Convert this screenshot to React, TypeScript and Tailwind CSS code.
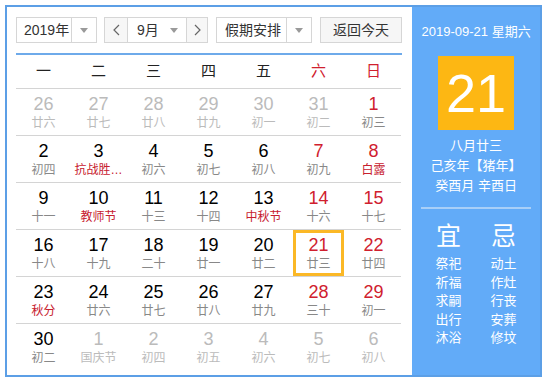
import React from 'react'

type Day = {
	num: number
	lunar: string
	dim?: boolean
	redNum?: boolean
	redLunar?: boolean
	today?: boolean
}

const rows: Day[][] = [
	[
		{ num: 26, lunar: '廿六', dim: true },
		{ num: 27, lunar: '廿七', dim: true },
		{ num: 28, lunar: '廿八', dim: true },
		{ num: 29, lunar: '廿九', dim: true },
		{ num: 30, lunar: '初一', dim: true },
		{ num: 31, lunar: '初二', dim: true },
		{ num: 1, lunar: '初三', redNum: true },
	],
	[
		{ num: 2, lunar: '初四' },
		{ num: 3, lunar: '抗战胜…', redLunar: true },
		{ num: 4, lunar: '初六' },
		{ num: 5, lunar: '初七' },
		{ num: 6, lunar: '初八' },
		{ num: 7, lunar: '初九', redNum: true },
		{ num: 8, lunar: '白露', redNum: true, redLunar: true },
	],
	[
		{ num: 9, lunar: '十一' },
		{ num: 10, lunar: '教师节', redLunar: true },
		{ num: 11, lunar: '十三' },
		{ num: 12, lunar: '十四' },
		{ num: 13, lunar: '中秋节', redLunar: true },
		{ num: 14, lunar: '十六', redNum: true },
		{ num: 15, lunar: '十七', redNum: true },
	],
	[
		{ num: 16, lunar: '十八' },
		{ num: 17, lunar: '十九' },
		{ num: 18, lunar: '二十' },
		{ num: 19, lunar: '廿一' },
		{ num: 20, lunar: '廿二' },
		{ num: 21, lunar: '廿三', redNum: true, today: true },
		{ num: 22, lunar: '廿四', redNum: true },
	],
	[
		{ num: 23, lunar: '秋分', redLunar: true },
		{ num: 24, lunar: '廿六' },
		{ num: 25, lunar: '廿七' },
		{ num: 26, lunar: '廿八' },
		{ num: 27, lunar: '廿九' },
		{ num: 28, lunar: '三十', redNum: true },
		{ num: 29, lunar: '初一', redNum: true },
	],
	[
		{ num: 30, lunar: '初二' },
		{ num: 1, lunar: '国庆节', dim: true },
		{ num: 2, lunar: '初四', dim: true },
		{ num: 3, lunar: '初五', dim: true },
		{ num: 4, lunar: '初六', dim: true },
		{ num: 5, lunar: '初七', dim: true },
		{ num: 6, lunar: '初八', dim: true },
	],
]

const weekdays = ['一', '二', '三', '四', '五', '六', '日']
const yi = ['祭祀', '祈福', '求嗣', '出行', '沐浴']
const ji = ['动土', '作灶', '行丧', '安葬', '修坟']

function Caret() {
	return (
		<svg width="8" height="5" viewBox="0 0 8 5" aria-hidden="true">
			<path d="M0 0 L8 0 L4 5 Z" fill="#9a9a9a" />
		</svg>
	)
}

function Chevron({ dir }: { dir: 'left' | 'right' }) {
	return (
		<svg width="7" height="12" viewBox="0 0 7 12" aria-hidden="true">
			<path
				d={dir === 'left' ? 'M6 1 L1 6 L6 11' : 'M1 1 L6 6 L1 11'}
				fill="none"
				stroke="#666"
				strokeWidth="1.2"
			/>
		</svg>
	)
}

function DayCell({ day }: { day: Day }) {
	const numColor = day.dim ? 'text-[#bbbbbb]' : day.redNum ? 'text-[#d0202e]' : 'text-black'
	const lunarColor = day.dim ? 'text-[#bbbbbb]' : day.redLunar ? 'text-[#c7202e]' : 'text-[#888888]'

	return (
		<div className="relative flex h-[46px] flex-col items-center">
			{day.today && (
				<div className="absolute inset-y-0 left-[2px] right-[2px] border-[3px] border-[#fbb826]" />
			)}
			<span className={`mt-[4px] text-[18px] leading-[22px] ${numColor}`}>{day.num}</span>
			<span className={`text-[12px] leading-[16px] whitespace-nowrap ${lunarColor}`}>{day.lunar}</span>
		</div>
	)
}

export default function App() {
	return (
		<div
			className="ml-[5px] mt-[5px] flex h-[372px] w-[537px] border-2 border-[#5c9fe6] bg-white"
			style={{ fontFamily: '"Liberation Sans", "Noto Sans CJK SC", sans-serif' }}
		>
			{/* Left: calendar */}
			<div className="w-[406px] pl-[9px] pt-[10px]">
				<div className="flex h-[26px] items-stretch text-[14px] text-[#333]">
					{/* Year select */}
					<div className="flex w-[81px] border border-[#d6d6d6]">
						<span className="flex flex-1 items-center whitespace-nowrap pl-[7px]">2019年</span>
						<span className="flex w-[25px] shrink-0 items-center justify-center border-l border-[#d6d6d6]">
							<Caret />
						</span>
					</div>

					{/* Month group */}
					<div className="ml-[7px] flex w-[104px] border border-[#d6d6d6]">
						<span className="flex w-[22px] items-center justify-center bg-[#f7f7f7]">
							<Chevron dir="left" />
						</span>
						<span className="flex w-[59px] items-center border-l border-[#d6d6d6] pl-[9px]">
							<span className="flex-1">9月</span>
							<span className="mr-[8px]"><Caret /></span>
						</span>
						<span className="flex flex-1 items-center justify-center border-l border-[#d6d6d6] bg-[#f7f7f7]">
							<Chevron dir="right" />
						</span>
					</div>

					{/* Holiday select */}
					<div className="ml-[8px] flex w-[96px] border border-[#d6d6d6]">
						<span className="flex flex-1 items-center whitespace-nowrap pl-[8px]">假期安排</span>
						<span className="flex w-[25px] shrink-0 items-center justify-center border-l border-[#d6d6d6]">
							<Caret />
						</span>
					</div>

					<button
						type="button"
						className="ml-[8px] w-[82px] border border-[#d6d6d6] bg-[#f6f6f6] text-[14px] text-[#333]"
					>
						返回今天
					</button>
				</div>

				<div className="mt-[10px] h-[2px] w-[386px] bg-[#6eaaea]" />

				<div className="w-[385px]">
					<div className="grid h-[34px] grid-cols-7 items-center border-b border-[#d4d4d4] text-[15px]">
						{weekdays.map((w, i) => (
							<span key={w} className={`text-center ${i >= 5 ? 'text-[#d0202e]' : 'text-[#222]'}`}>
								{w}
							</span>
						))}
					</div>

					{rows.map((row, r) => (
						<div
							key={r}
							className={`grid grid-cols-7 ${r < rows.length - 1 ? 'border-b border-[#d4d4d4]' : ''}`}
						>
							{row.map((day, c) => (
								<DayCell key={c} day={day} />
							))}
						</div>
					))}
				</div>
			</div>

			{/* Right: today panel */}
			<div className="flex w-[128px] flex-col items-center bg-[#62abf8] text-white">
				<div className="mt-[17px] text-[13px] leading-[16px]">2019-09-21 星期六</div>

				<div className="mt-[16px] flex h-[74px] w-[76px] items-center justify-center bg-[#fdb713] text-[54px] leading-none">
					21
				</div>

				<div className="mt-[6px] flex flex-col items-center text-[13px] leading-[20px]">
					<span>八月廿三</span>
					<span>己亥年【猪年】</span>
					<span>癸酉月 辛酉日</span>
				</div>

				<div className="mt-[11px] h-[2px] w-[110px] bg-[#a8cff8]" />

				<div className="mt-[12px] grid w-[110px] grid-cols-2">
					<div className="flex flex-col items-center">
						<span className="text-[25px] leading-[30px]">宜</span>
						<div className="mt-[4px] flex flex-col items-center text-[13px] leading-[18.5px]">
							{yi.map(t => <span key={t}>{t}</span>)}
						</div>
					</div>
					<div className="flex flex-col items-center">
						<span className="text-[25px] leading-[30px]">忌</span>
						<div className="mt-[4px] flex flex-col items-center text-[13px] leading-[18.5px]">
							{ji.map(t => <span key={t}>{t}</span>)}
						</div>
					</div>
				</div>
			</div>
		</div>
	)
}
